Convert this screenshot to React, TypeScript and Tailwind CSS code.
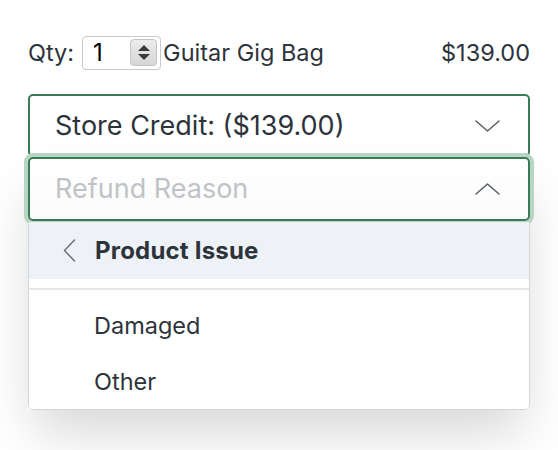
const font = { fontFamily: "Inter, 'Noto Sans', sans-serif" };

function Stepper() {
  return (
    <div className="flex h-[27px] w-[27px] flex-col items-center justify-center gap-[3px] rounded-[4px] border border-[#c4c4c4] bg-gradient-to-b from-[#ececec] to-[#d6d6d6]">
      <div className="h-0 w-0 border-x-[6px] border-b-[6px] border-x-transparent border-b-[#3a3a3a]" />
      <div className="h-0 w-0 border-x-[6px] border-t-[6px] border-x-transparent border-t-[#3a3a3a]" />
    </div>
  );
}

function Chevron({ up = false }: { up?: boolean }) {
  return (
    <svg width="25" height="12" viewBox="0 0 25 12" fill="none" className="text-[#59616a]">
      <polyline
        points={up ? "1,11 12.5,1 24,11" : "1,1 12.5,11 24,1"}
        stroke="currentColor"
        strokeWidth="1.6"
        strokeLinecap="round"
        strokeLinejoin="round"
      />
    </svg>
  );
}

export default function App() {
  return (
    <div className="min-h-[450px] bg-white text-[#2d333a]" style={font}>
      <div className="flex items-center px-[28px] pt-[35px] text-[23.5px]">
        <span>Qty:</span>
        <div className="ml-[8px] flex h-[34px] w-[79px] items-center justify-between rounded-[4px] border-[1.5px] border-[#c9c9c9] pl-[10px] pr-[3px]">
          <span className="text-[24px] text-black">1</span>
          <Stepper />
        </div>
        <span className="ml-[2px]">Guitar Gig Bag</span>
        <span className="ml-auto">$139.00</span>
      </div>

      <div className="mx-[28px] mt-[24px]">
        <div className="flex h-[63px] items-center justify-between rounded-[5px] border-2 border-[#3a7a55] pl-[25px] pr-[28px] text-[27px]">
          <span>Store Credit: ($139.00)</span>
          <Chevron />
        </div>

        <div className="relative shadow-[0_28px_50px_-6px_rgba(0,0,0,0.16)]">
          <div className="flex h-[64px] items-center justify-between rounded-[5px] border-2 border-[#3a7a55] bg-gradient-to-b from-white to-[#fbfbfb] pl-[25px] pr-[28px] text-[27px] shadow-[0_0_0_4px_#b8d5c3]">
            <span className="text-[#bfc3c7]">Refund Reason</span>
            <Chevron up />
          </div>

          <div className="rounded-b-[5px] border-x border-b border-[#d4d7da] bg-white">
            <div className="mt-[1px] flex h-[57px] items-center bg-[#eef1f6] pl-[34px] text-[24px] font-bold tracking-[0.2px]">
              <svg width="13" height="23" viewBox="0 0 13 23" fill="none" className="text-[#6b7178]">
                <polyline points="11.5,1 1.5,11.5 11.5,22" stroke="currentColor" strokeWidth="1.5" strokeLinecap="round" strokeLinejoin="round" />
              </svg>
              <span className="ml-[19px]">Product Issue</span>
            </div>
            <div className="mt-[9px] h-[2px] bg-[#e6e7e9]" />
            <div className="pt-[7px] text-[23.5px]">
              <div className="flex h-[56px] items-center pl-[65px]">Damaged</div>
              <div className="flex h-[56px] items-center pl-[65px]">Other</div>
            </div>
          </div>
        </div>
      </div>
    </div>
  );
}
